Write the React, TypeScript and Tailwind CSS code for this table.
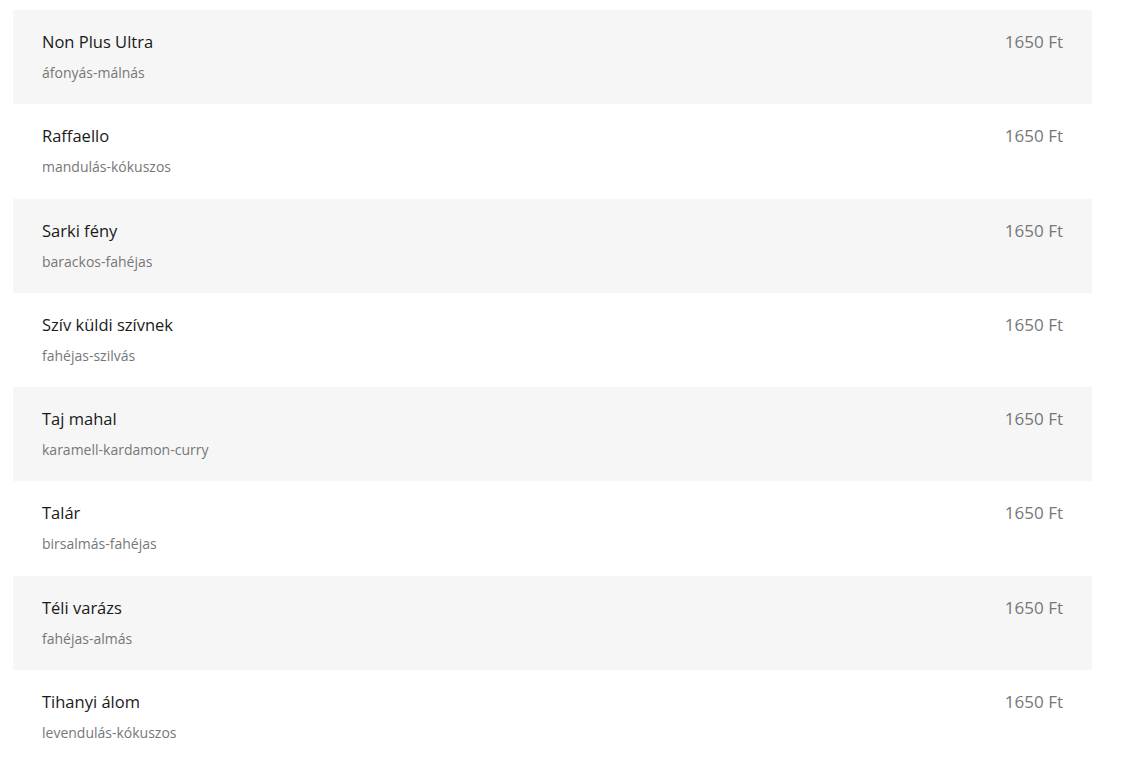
const items = [
  { name: "Non Plus Ultra", desc: "áfonyás-málnás" },
  { name: "Raffaello", desc: "mandulás-kókuszos" },
  { name: "Sarki fény", desc: "barackos-fahéjas" },
  { name: "Szív küldi szívnek", desc: "fahéjas-szilvás" },
  { name: "Taj mahal", desc: "karamell-kardamon-curry" },
  { name: "Talár", desc: "birsalmás-fahéjas" },
  { name: "Téli varázs", desc: "fahéjas-almás" },
  { name: "Tihanyi álom", desc: "levendulás-kókuszos" },
];

export default function App() {
  return (
    <div
      className="min-h-screen bg-white pt-[10px] pl-[13px]"
      style={{ fontFamily: '"Open Sans", "Noto Sans", sans-serif' }}
    >
      <div className="w-[1079px] flex flex-col">
        {items.map((item, i) => (
          <div
            key={item.name}
            className={
              "h-[94.3px] flex justify-between px-[29px] pt-[20px] " +
              (i % 2 === 0 ? "bg-[#f6f6f6]" : "bg-white")
            }
          >
            <div className="flex flex-col">
              <span className="text-[16.5px] leading-[24px] text-[#1a1a1a]">{item.name}</span>
              <span className="text-[14px] leading-[20px] mt-[9px] text-[#777]">{item.desc}</span>
            </div>
            <span className="text-[17px] leading-[24px] text-[#777]">1650 Ft</span>
          </div>
        ))}
      </div>
    </div>
  );
}
